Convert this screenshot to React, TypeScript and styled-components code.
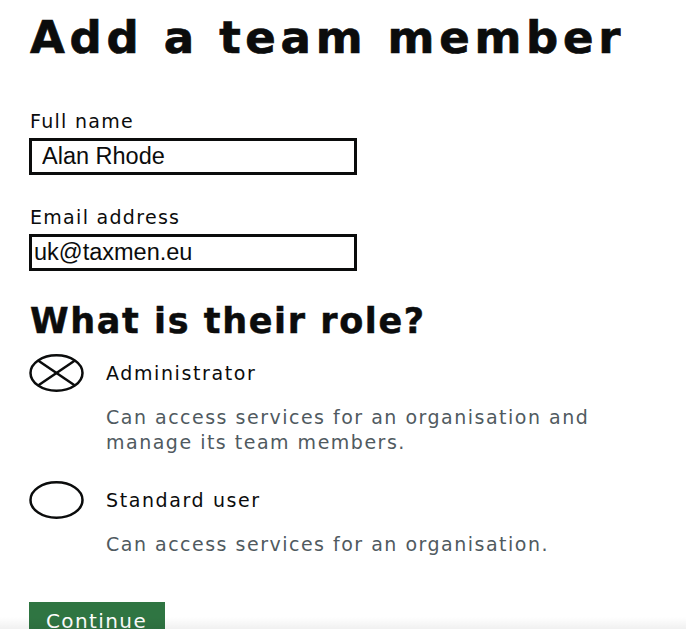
import React from 'react';
import styled, { createGlobalStyle } from 'styled-components';

const GlobalStyle = createGlobalStyle`
    html, body {
        margin: 0;
        padding: 0;
        background: #ffffff;
        overflow: hidden;
    }
    body {
        font-family: "DejaVu Sans", "Liberation Sans", Arial, sans-serif;
        color: #0b0c0c;
    }
`;

const Page = styled.main`
    position: relative;
    height: 629px;
    padding: 15px 0 0 30px;
    box-sizing: border-box;
    overflow: hidden;
`;

const Title = styled.h1`
    margin: 0 0 49px;
    font-weight: 700;
    font-size: 45px;
    line-height: 45px;
    letter-spacing: 4.7px;
    -webkit-text-stroke: 0.7px #0b0c0c;
`;

const Field = styled.div`
    display: flex;
    flex-direction: column;
    margin-bottom: 30px;
`;

const Label = styled.label`
    font-size: 19px;
    line-height: 24px;
    letter-spacing: 1.3px;
    margin-bottom: 5px;
`;

const TextInput = styled.input<{ $inset: number }>`
    width: 328px;
    height: 37px;
    box-sizing: border-box;
    margin-left: -1px;
    border: 3px solid #0b0c0c;
    padding: 0 0 0 ${p => p.$inset}px;
    font-family: "Liberation Sans", Arial, sans-serif;
    font-size: 23.5px;
    color: #0b0c0c;
    background: #fff;
    outline: none;
`;

const Legend = styled.h2`
    margin: 29px 0 13px;
    font-weight: 700;
    font-size: 35px;
    line-height: 40px;
    letter-spacing: 1.6px;
    -webkit-text-stroke: 0.5px #0b0c0c;
`;

const Option = styled.div`
    display: grid;
    grid-template-columns: 54px 1fr;
    column-gap: 22px;
    margin-bottom: 26px;
`;

const Mark = styled.svg`
    display: block;
    margin-left: -1px;
`;

const OptionLabel = styled.div`
    align-self: center;
    font-size: 19px;
    line-height: 25px;
    letter-spacing: 1.6px;
`;

const Hint = styled.div`
    grid-column: 2;
    max-width: 500px;
    margin-top: 13px;
    font-size: 19px;
    line-height: 25px;
    letter-spacing: 1.5px;
    color: #505a5f;
`;

const Button = styled.button`
    display: block;
    margin: 45px 0 0 -1px;
    width: 136px;
    height: 46px;
    border: none;
    padding: 7px 0 14px 17px;
    box-sizing: border-box;
    text-align: left;
    background: #2f7542;
    color: #fff;
    font-family: "DejaVu Sans", "Liberation Sans", sans-serif;
    font-size: 20px;
    line-height: 25px;
    letter-spacing: 1.4px;
`;

const BottomShade = styled.div`
    position: absolute;
    left: 0;
    right: 0;
    bottom: 0;
    height: 12px;
    background: linear-gradient(to bottom, rgba(0, 0, 0, 0), rgba(0, 0, 0, 0.06));
    pointer-events: none;
`;

// radio outline is drawn oval, with a cross through it when selected
const RadioMark = ({ checked }: { checked: boolean }) => (
    <Mark width="55" height="38" viewBox="0 0 55 38">
        <ellipse cx="27.5" cy="19" rx="26" ry="17.7" fill="none" stroke="#0b0c0c" strokeWidth="2.5" />
        {checked ? (
            <>
                <line x1="9.1" y1="6.5" x2="45.9" y2="31.5" stroke="#0b0c0c" strokeWidth="2.5" />
                <line x1="45.9" y1="6.5" x2="9.1" y2="31.5" stroke="#0b0c0c" strokeWidth="2.5" />
            </>
        ) : null}
    </Mark>
);

const roles = [
    { name: 'Administrator', hint: 'Can access services for an organisation and manage its team members.', checked: true },
    { name: 'Standard user', hint: 'Can access services for an organisation.', checked: false },
];

export default function App() {
    return <Page>
        <GlobalStyle />
        <Title>Add a team member</Title>
        <Field>
            <Label>Full name</Label>
            <TextInput $inset={10} defaultValue="Alan Rhode" />
        </Field>
        <Field>
            <Label>Email address</Label>
            <TextInput $inset={2} defaultValue="uk@taxmen.eu" />
        </Field>
        <Legend>What is their role?</Legend>
        {roles.map(role => <Option key={role.name}>
            <RadioMark checked={role.checked} />
            <OptionLabel>{role.name}</OptionLabel>
            <Hint>{role.hint}</Hint>
        </Option>)}
        <Button>Continue</Button>
        <BottomShade />
    </Page>;
}
